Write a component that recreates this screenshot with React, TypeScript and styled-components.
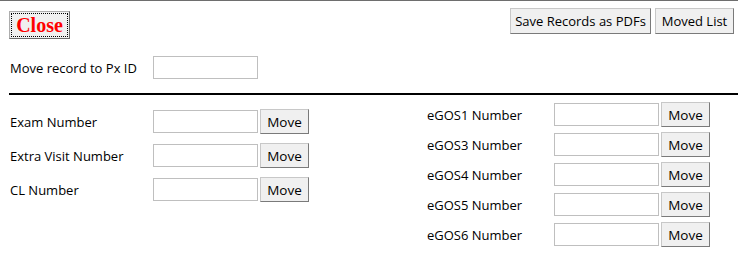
import styled, { createGlobalStyle } from 'styled-components'

const GlobalStyle = createGlobalStyle`
  body {
    margin: 0;
    background: #ffffff;
    font-family: "Open Sans", "Noto Sans", sans-serif;
    color: #000;
  }
`

const Page = styled.div`
  width: 738px;
  height: 255px;
  box-sizing: border-box;
  border-top: 1px solid #6e6e6e;
  overflow: hidden;
`

const TopBar = styled.div`
  display: flex;
  justify-content: space-between;
  align-items: flex-start;
  padding: 0 4px 0 9px;
`

const CloseButton = styled.button`
  margin-top: 10px;
  width: 61px;
  height: 28px;
  padding: 0;
  background: #f0f0f0;
  border: 1px solid #adadad;
  border-right-color: #6a6a6a;
  border-bottom-color: #6a6a6a;
  outline: 1px dotted #000;
  outline-offset: -3px;
  font-family: "Liberation Serif", "Times New Roman", serif;
  font-weight: bold;
  font-size: 20px;
  color: #ff0000;
`

const ActionGroup = styled.div`
  display: flex;
  gap: 4px;
  margin-top: 7px;
`

const GrayButton = styled.button<{ $w: number }>`
  width: ${p => p.$w}px;
  height: 26px;
  padding: 0;
  background: #f0f0f0;
  border: 1px solid #c8c8c8;
  border-right-color: #7a7a7a;
  border-bottom-color: #7a7a7a;
  font-family: "Open Sans", "Noto Sans", sans-serif;
  font-size: 13px;
  color: #000;
`

const PxRow = styled.div`
  display: flex;
  align-items: center;
  padding-left: 10px;
  margin-top: 17px;
`

const Label = styled.span<{ $w: number }>`
  width: ${p => p.$w}px;
  font-size: 13px;
  line-height: 18px;
`

const TextBox = styled.input`
  box-sizing: border-box;
  width: 105px;
  height: 23px;
  border: 1px solid #bfbfbf;
  padding: 0 3px;
  margin: 0;
  background: #fff;
`

const Divider = styled.hr`
  margin: 14px 0 0 9px;
  border: none;
  height: 2px;
  background: #000;
`

const Columns = styled.div`
  display: grid;
  grid-template-columns: 417px 1fr;
  padding-left: 10px;
`

const LeftList = styled.div`
  display: flex;
  flex-direction: column;
  gap: 9px;
  padding-top: 14px;
`

const RightList = styled.div`
  display: flex;
  flex-direction: column;
  gap: 5px;
  padding-top: 7px;
`

const FieldRow = styled.div`
  display: flex;
  align-items: center;
  height: 25px;
`

const MoveButton = styled(GrayButton)`
  height: 25px;
  margin-left: 2px;
  font-size: 13.5px;
`

const Field = ({ label, w }: { label: string; w: number }) => (
  <FieldRow>
    <Label $w={w}>{label}</Label>
    <TextBox type='text' />
    <MoveButton $w={49}>Move</MoveButton>
  </FieldRow>
)

const leftFields = ['Exam Number', 'Extra Visit Number', 'CL Number']
const rightFields = ['eGOS1 Number', 'eGOS3 Number', 'eGOS4 Number', 'eGOS5 Number', 'eGOS6 Number']

function App() {
  return (
    <Page>
      <GlobalStyle />
      <TopBar>
        <CloseButton>Close</CloseButton>
        <ActionGroup>
          <GrayButton $w={141}>Save Records as PDFs</GrayButton>
          <GrayButton $w={79}>Moved List</GrayButton>
        </ActionGroup>
      </TopBar>
      <PxRow>
        <Label $w={143}>Move record to Px ID</Label>
        <TextBox type='text' />
      </PxRow>
      <Divider />
      <Columns>
        <LeftList>
          {leftFields.map(f => <Field key={f} label={f} w={143} />)}
        </LeftList>
        <RightList>
          {rightFields.map(f => <Field key={f} label={f} w={127} />)}
        </RightList>
      </Columns>
    </Page>
  )
}

export default App
